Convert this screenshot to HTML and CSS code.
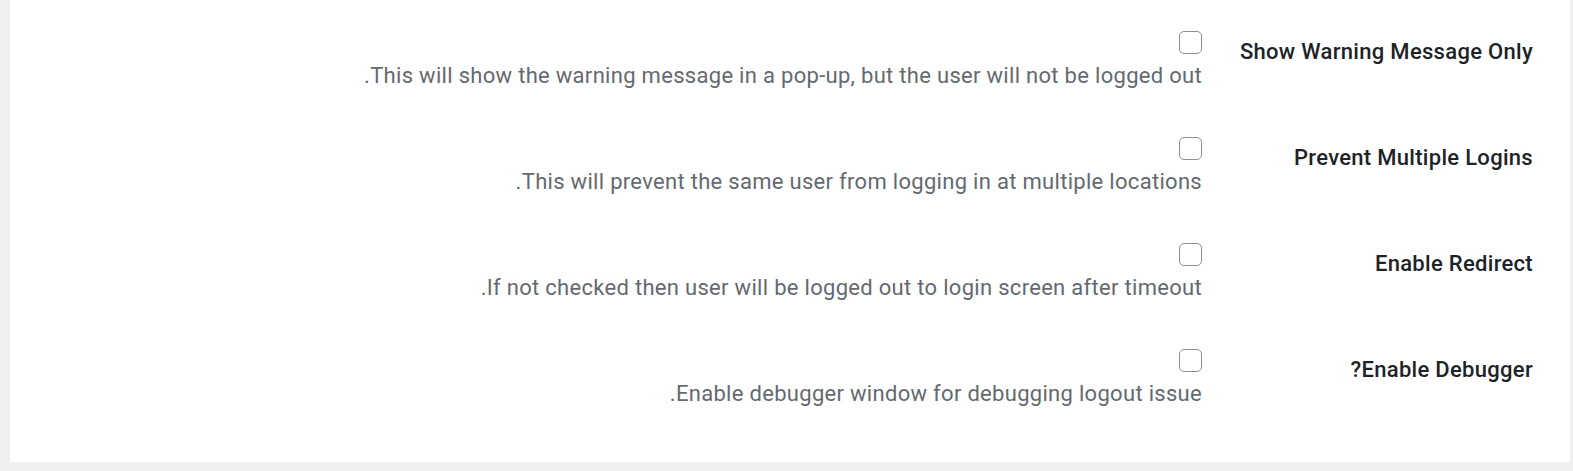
FILE: index.html
```html
<!DOCTYPE html>
<html lang="en" dir="rtl">
<head>
    <meta charset="UTF-8">
    <meta name="viewport" content="width=device-width, initial-scale=1.0">
    <title>Idle Logout Settings</title>
    <link rel="stylesheet" href="styles.css">
</head>

<body>
    <div class="panel">
        <div class="row">
            <div class="label">Show Warning Message Only</div>
            <div class="field">
                <span class="check"></span>
                <p class="desc">This will show the warning message in a pop-up, but the user will not be logged out.</p>
            </div>
        </div>
        <div class="row">
            <div class="label">Prevent Multiple Logins</div>
            <div class="field">
                <span class="check"></span>
                <p class="desc">This will prevent the same user from logging in at multiple locations.</p>
            </div>
        </div>
        <div class="row">
            <div class="label">Enable Redirect</div>
            <div class="field">
                <span class="check"></span>
                <p class="desc">If not checked then user will be logged out to login screen after timeout.</p>
            </div>
        </div>
        <div class="row">
            <div class="label">Enable Debugger?</div>
            <div class="field">
                <span class="check"></span>
                <p class="desc">Enable debugger window for debugging logout issue.</p>
            </div>
        </div>
    </div>
</body>

</html>
```

FILE: styles.css
```css
* {
    margin: 0;
    padding: 0;
    box-sizing: border-box;
}

body {
    background-color: #f0f0f1;
    font-family: Roboto, "Liberation Sans", sans-serif;
    font-size: 22px;
    line-height: 28px;
    letter-spacing: 0.3px;
}

.panel {
    background-color: white;
    margin: 0 3px 9px 10px;
    padding: 7px 37px 31px 0;
}

.row {
    display: grid;
    grid-template-columns: 331px 1fr;
    padding: 24px 0 23px;
}

.label {
    margin-top: 7px;
    font-weight: 500;
    color: #1d2327;
}

.check {
    display: block;
    width: 23px;
    height: 23px;
    border: 1px solid #8c8f94;
    border-radius: 5px;
    background: white;
}

.desc {
    margin-top: 8px;
    color: #646970;
}
```
